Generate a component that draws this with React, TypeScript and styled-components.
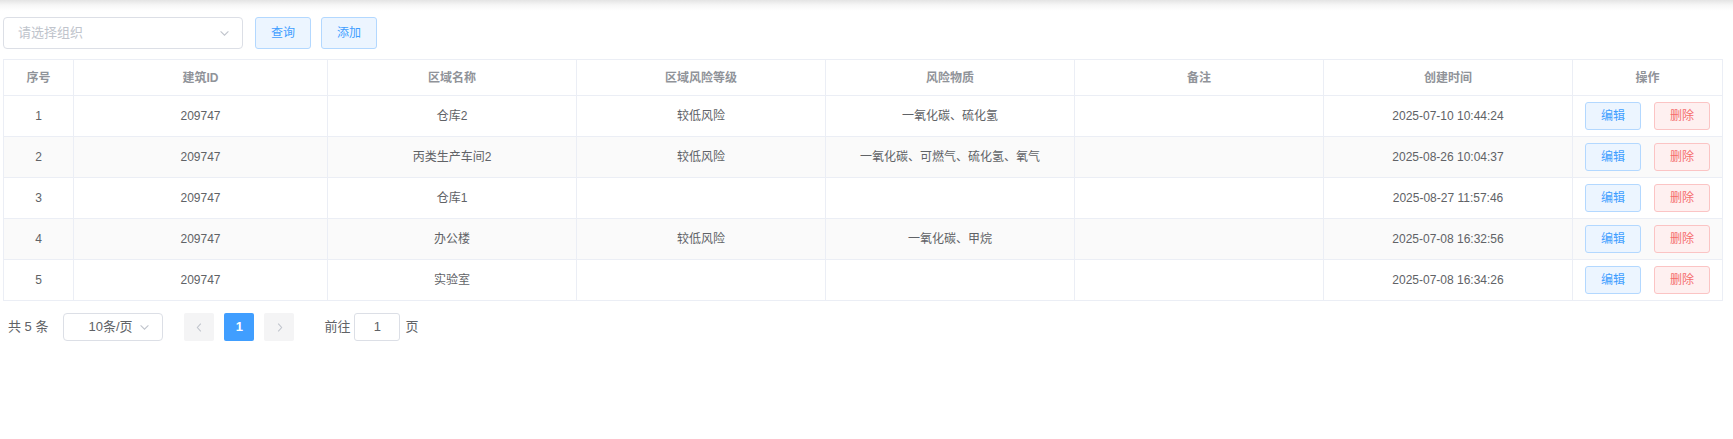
import React from 'react';
import styled, { createGlobalStyle } from 'styled-components';

const GlobalStyle = createGlobalStyle`
  * { box-sizing: border-box; }
  body {
    margin: 0;
    background: #fff;
    font-family: "Liberation Sans", "Noto Sans CJK SC", sans-serif;
    line-height: 20px;
    color: #606266;
  }
`;

const Page = styled.div`
  min-height: 439px;
  padding: 17px 10px 0 3px;
  background: linear-gradient(to bottom, #e4e4e4 0, #f6f6f6 5px, #fff 11px);
`;

const Toolbar = styled.div`
  display: flex;
  align-items: center;
  height: 32px;
  margin-bottom: 10px;
`;

const SelectBox = styled.div<{ w: number; h: number }>`
  width: ${p => p.w}px;
  height: ${p => p.h}px;
  border: 1px solid #dcdfe6;
  border-radius: 4px;
  background: #fff;
  display: flex;
  align-items: center;
  justify-content: space-between;
  padding: 0 11px 0 14px;
  font-size: 13px;
`;

const Placeholder = styled.span`
  color: #c0c4cc;
`;

const SelectValue = styled.span`
  flex: 1;
  text-align: center;
  color: #606266;
  padding-left: 4px;
`;

const Arrow = styled.svg`
  width: 13px;
  height: 13px;
  flex: none;
`;

const PlainButton = styled.button<{ variant?: 'primary' | 'danger'; h: number }>`
  width: 56px;
  height: ${p => p.h}px;
  padding: 0;
  border-radius: 3px;
  font-family: inherit;
  line-height: 20px;
  font-size: 12px;
  cursor: pointer;
  border: 1px solid ${p => (p.variant === 'danger' ? '#fbc4c4' : '#b3d8ff')};
  background: ${p => (p.variant === 'danger' ? '#fef0f0' : '#ecf5ff')};
  color: ${p => (p.variant === 'danger' ? '#f56c6c' : '#409eff')};
`;

const ToolButton = styled(PlainButton)<{ gap: number }>`
  margin-left: ${p => p.gap}px;
`;

const Table = styled.div`
  width: 1720px;
  border-left: 1px solid #ebeef5;
  border-top: 1px solid #ebeef5;
`;

const Row = styled.div<{ header?: boolean; striped?: boolean }>`
  display: grid;
  grid-template-columns: 70px 254px repeat(5, 249px) 150px;
  height: ${p => (p.header ? 36 : 41)}px;
  background: ${p => (p.striped ? '#fafafa' : '#fff')};
`;

const Cell = styled.div<{ header?: boolean }>`
  display: flex;
  align-items: center;
  justify-content: center;
  border-right: 1px solid #ebeef5;
  border-bottom: 1px solid #ebeef5;
  font-size: 12px;
  color: ${p => (p.header ? '#909399' : '#606266')};
  font-weight: ${p => (p.header ? 700 : 400)};
  white-space: nowrap;
`;

const Actions = styled(Cell)`
  gap: 13px;
`;

const Pagination = styled.div`
  display: flex;
  align-items: center;
  height: 28px;
  margin-top: 12px;
  padding-left: 5px;
  font-size: 13px;
  color: #606266;
`;

const Total = styled.span`
  margin-right: 15px;
`;

const PageBtn = styled.div<{ active?: boolean; ml: number }>`
  width: 30px;
  height: 28px;
  margin-left: ${p => p.ml}px;
  border-radius: 2px;
  display: flex;
  align-items: center;
  justify-content: center;
  background: ${p => (p.active ? '#409eff' : '#f4f4f5')};
  color: ${p => (p.active ? '#fff' : '#c0c4cc')};
  font-weight: 700;
  font-size: 13px;
`;

const Jumper = styled.span`
  margin-left: 30px;
  display: flex;
  align-items: center;
`;

const JumpInput = styled.div`
  width: 46px;
  height: 28px;
  margin: 0 5px 0 4px;
  border: 1px solid #dcdfe6;
  border-radius: 3px;
  display: flex;
  align-items: center;
  justify-content: center;
`;

const Chevron = ({ dir, color }: { dir: 'down' | 'left' | 'right'; color: string }) => {
  const d = dir === 'down' ? 'M3 5l4.5 4.5L12 5' : dir === 'left' ? 'M9 3L5 7.5 9 12' : 'M6 3l4 4.5L6 12';
  return (
    <Arrow viewBox="0 0 15 15">
      <path d={d} fill="none" stroke={color} strokeWidth="1.2" />
    </Arrow>
  );
};

const columns = ['序号', '建筑ID', '区域名称', '区域风险等级', '风险物质', '备注', '创建时间', '操作'];

const rows = [
  { id: '209747', name: '仓库2', level: '较低风险', matter: '一氧化碳、硫化氢', time: '2025-07-10 10:44:24' },
  { id: '209747', name: '丙类生产车间2', level: '较低风险', matter: '一氧化碳、可燃气、硫化氢、氧气', time: '2025-08-26 10:04:37' },
  { id: '209747', name: '仓库1', level: '', matter: '', time: '2025-08-27 11:57:46' },
  { id: '209747', name: '办公楼', level: '较低风险', matter: '一氧化碳、甲烷', time: '2025-07-08 16:32:56' },
  { id: '209747', name: '实验室', level: '', matter: '', time: '2025-07-08 16:34:26' },
];

export default function App() {
  return (
    <Page>
      <GlobalStyle />
      <Toolbar>
        <SelectBox w={240} h={32}>
          <Placeholder>请选择组织</Placeholder>
          <Chevron dir="down" color="#c0c4cc" />
        </SelectBox>
        <ToolButton h={32} gap={12}>查询</ToolButton>
        <ToolButton h={32} gap={10}>添加</ToolButton>
      </Toolbar>

      <Table>
        <Row header>
          {columns.map(c => (
            <Cell header key={c}>{c}</Cell>
          ))}
        </Row>
        {rows.map((r, i) => (
          <Row key={i} striped={i % 2 === 1}>
            <Cell>{i + 1}</Cell>
            <Cell>{r.id}</Cell>
            <Cell>{r.name}</Cell>
            <Cell>{r.level}</Cell>
            <Cell>{r.matter}</Cell>
            <Cell />
            <Cell>{r.time}</Cell>
            <Actions>
              <PlainButton h={28}>编辑</PlainButton>
              <PlainButton h={28} variant="danger">删除</PlainButton>
            </Actions>
          </Row>
        ))}
      </Table>

      <Pagination>
        <Total>共 5 条</Total>
        <SelectBox w={100} h={28}>
          <SelectValue>10条/页</SelectValue>
          <Chevron dir="down" color="#c0c4cc" />
        </SelectBox>
        <PageBtn ml={21}><Chevron dir="left" color="#c0c4cc" /></PageBtn>
        <PageBtn ml={10} active>1</PageBtn>
        <PageBtn ml={10}><Chevron dir="right" color="#c0c4cc" /></PageBtn>
        <Jumper>
          前往
          <JumpInput>1</JumpInput>
          页
        </Jumper>
      </Pagination>
    </Page>
  );
}
